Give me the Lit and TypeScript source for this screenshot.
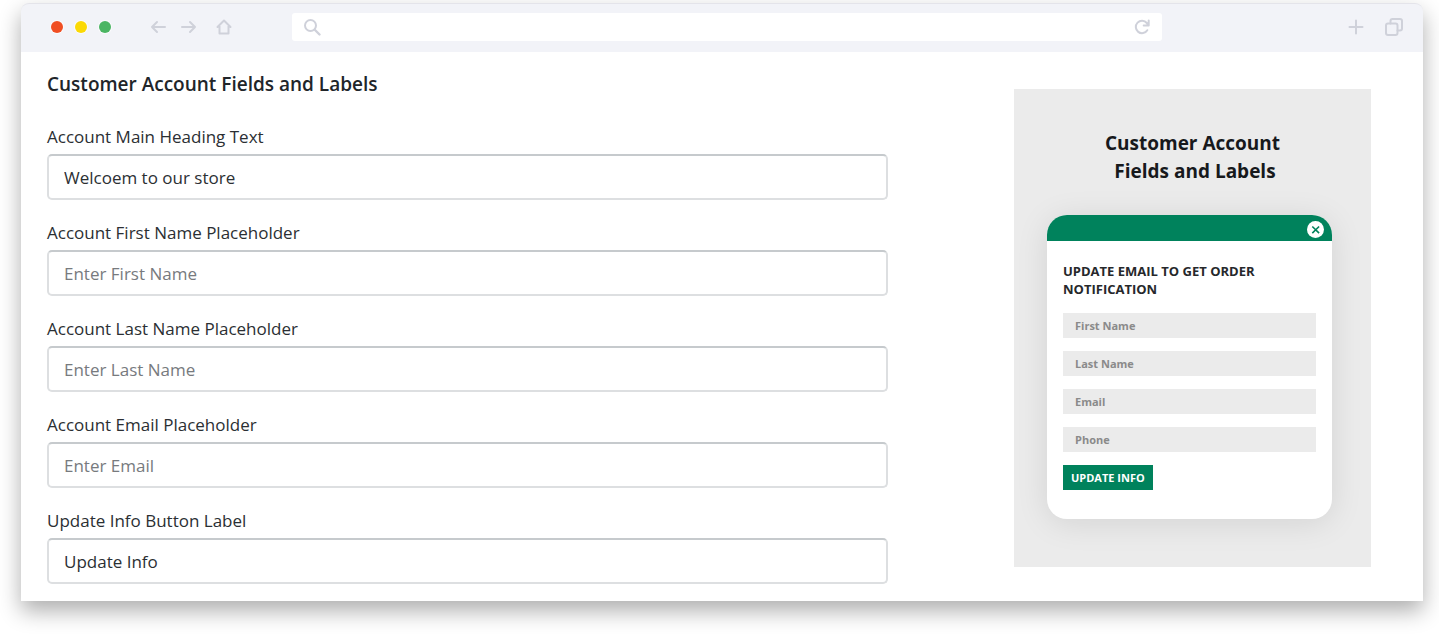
import { LitElement, html, css, svg } from "lit";
import { customElement, property } from "lit/decorators.js";

interface Field {
  id: string;
  label: string;
  value?: string;
  placeholder?: string;
}

const FIELDS: Field[] = [
  { id: "heading", label: "Account Main Heading Text", value: "Welcoem to our store" },
  { id: "first", label: "Account First Name Placeholder", placeholder: "Enter First Name" },
  { id: "last", label: "Account Last Name Placeholder", placeholder: "Enter Last Name" },
  { id: "email", label: "Account Email Placeholder", placeholder: "Enter Email" },
  { id: "button", label: "Update Info Button Label", value: "Update Info" },
];

const ICONS = {
  back: svg`<path d="M16 9H3M8 4L3 9l5 5" />`,
  forward: svg`<path d="M2 9h13M10 4l5 5-5 5" />`,
  home: svg`<path d="M2.500 9L9 2.500 15.500 9M4.500 8v7.500h9V8" />`,
  search: svg`<circle cx="7.500" cy="7.500" r="5.500" /><path d="M12 12l4.500 4.500" stroke-width="2.400" />`,
  reload: svg`<path d="M14.300 12.200A6.200 6.200 0 1 1 13.800 5l1.700 2M15.700 2.500v5h-5" />`,
  plus: svg`<path d="M9 2.500v13M2.500 9h13" />`,
  tabs: svg`<rect x="1" y="5.500" width="11.500" height="11.500" rx="2" /><path d="M5.500 5.500V3a2 2 0 0 1 2-2H15a2 2 0 0 1 2 2v7.500a2 2 0 0 1-2 2h-2.500" />`,
};

@customElement("browser-toolbar")
export class BrowserToolbar extends LitElement {
  static styles = css`
    :host {
      display: flex;
      align-items: center;
      height: 49px;
      padding: 0 20px 2px 30px;
      box-sizing: border-box;
      background: #f2f3f8;
      border-top: 1px solid #e4e4ea;
      border-radius: 8px 8px 0 0;
    }
    .dots {
      display: flex;
      gap: 12px;
    }
    .dot {
      width: 12px;
      height: 12px;
      border-radius: 50%;
      box-shadow: 0 0 0 1px #fafafc;
    }
    .red { background: #f04e23; }
    .yellow { background: #fbd905; }
    .green { background: #4bb563; }
    .nav {
      display: flex;
      gap: 13px;
      margin-left: 38px;
    }
    .nav .last {
      margin-left: 4px;
    }
    .address {
      flex: 1;
      display: flex;
      align-items: center;
      height: 28px;
      margin-left: 59px;
      padding: 0 11px;
      border-radius: 3px;
      background: #fff;
    }
    .query {
      flex: 1;
      min-width: 0;
      height: 24px;
      border: 0;
      outline: 0;
      background: transparent;
      font: 14px "Open Sans", sans-serif;
    }
    .actions {
      display: flex;
      gap: 20px;
      margin-left: 185px;
    }
    .icon {
      display: flex;
      padding: 0;
      border: 0;
      background: none;
      color: #cfd1da;
    }
    svg {
      fill: none;
      stroke: currentColor;
      stroke-width: 2;
      stroke-linecap: round;
      stroke-linejoin: round;
    }
  `;

  private icon(name: keyof typeof ICONS, label: string, size = 18, extra = "") {
    return html`<button class="icon ${extra}" type="button" aria-label=${label}>
      <svg width=${size} height=${size} viewBox="0 0 18 18">${ICONS[name]}</svg>
    </button>`;
  }

  render() {
    return html`
      <div class="dots">
        <span class="dot red"></span><span class="dot yellow"></span><span class="dot green"></span>
      </div>
      <div class="nav">
        ${this.icon("back", "Back")} ${this.icon("forward", "Forward")}
        ${this.icon("home", "Home", 18, "last")}
      </div>
      <div class="address">
        ${this.icon("search", "Search")}
        <input class="query" type="text" aria-label="Address" />
        ${this.icon("reload", "Reload")}
      </div>
      <div class="actions">
        ${this.icon("plus", "New tab")} ${this.icon("tabs", "Tabs")}
      </div>
    `;
  }
}

@customElement("settings-field")
export class SettingsField extends LitElement {
  @property({ attribute: false }) field!: Field;

  static styles = css`
    :host {
      display: flex;
      flex-direction: column;
      gap: 5px;
    }
    .label {
      font-size: 17px;
      line-height: 24px;
      color: #2b2f33;
    }
    .input {
      box-sizing: border-box;
      width: 100%;
      height: 46px;
      padding: 0 15px;
      border: 2px solid #dddfe1;
      border-top-color: #c6cacd;
      border-radius: 5px;
      outline: 0;
      background: #fff;
      color: #2b2f33;
      font: inherit;
      font-size: 17px;
    }
    .input::placeholder {
      color: #777a7e;
      opacity: 1;
    }
  `;

  render() {
    const { id, label, value = "", placeholder = "" } = this.field;
    return html`
      <label class="label" for=${id}>${label}</label>
      <input class="input" id=${id} type="text" .value=${value} placeholder=${placeholder} />
    `;
  }
}

@customElement("popup-preview")
export class PopupPreview extends LitElement {
  static styles = css`
    :host {
      display: block;
      box-sizing: border-box;
      padding: 40px 0 48px;
      background: #ebebeb;
    }
    .title {
      margin: 0 0 30px;
      font-size: 19px;
      line-height: 28px;
      font-weight: 700;
      text-align: center;
      color: #17191c;
    }
    .card {
      margin: 0 39px 0 33px;
      border-radius: 20px;
      overflow: hidden;
      background: #fff;
      box-shadow: 0 4px 32px rgba(0, 0, 0, 0.1);
    }
    .bar {
      display: flex;
      justify-content: flex-end;
      align-items: center;
      height: 26px;
      padding: 2px 8px 0;
      box-sizing: border-box;
      background: #00825c;
    }
    .close {
      display: flex;
      padding: 0;
      border: 0;
      background: none;
    }
    .body {
      padding: 21px 16px 29px;
    }
    .lead {
      margin: 0 0 15px;
      font-size: 13px;
      line-height: 18px;
      font-weight: 700;
      color: #26282b;
    }
    .form {
      display: flex;
      flex-direction: column;
      align-items: flex-start;
      gap: 13px;
    }
    .box {
      box-sizing: border-box;
      width: 100%;
      height: 25px;
      padding: 0 12px 1px;
      border: 0;
      outline: 0;
      border-radius: 0;
      background: #ebebeb;
      font: inherit;
      font-size: 11px;
      font-weight: 700;
    }
    .box::placeholder {
      color: #8a8a8a;
      opacity: 1;
    }
    .submit {
      height: 25px;
      padding: 0 8px;
      border: 0;
      background: #00825c;
      color: #fff;
      font: inherit;
      font-size: 11px;
      font-weight: 700;
      white-space: nowrap;
    }
  `;

  render() {
    return html`
      <h2 class="title">Customer Account<br />&nbsp;Fields and Labels</h2>
      <div class="card">
        <div class="bar">
          <button class="close" type="button" aria-label="Close">
            <svg width="17" height="17" viewBox="0 0 17 17">
              <circle cx="8.500" cy="8.500" r="8.500" fill="#fff" />
              <path d="M5.300 5.500l6.800 6.600M12.100 5.500l-6.800 6.600" stroke="#00825c" stroke-width="1.600" />
            </svg>
          </button>
        </div>
        <div class="body">
          <p class="lead">UPDATE EMAIL TO GET ORDER NOTIFICATION</p>
          <div class="form">
            ${["First Name", "Last Name", "Email", "Phone"].map(
              (name) => html`<input class="box" type="text" placeholder=${name} aria-label=${name} />`
            )}
            <button class="submit" type="button">UPDATE INFO</button>
          </div>
        </div>
      </div>
    `;
  }
}

@customElement("app-root")
export class AppRoot extends LitElement {
  static styles = css`
    :host {
      display: block;
      padding: 3px 16px 33px 21px;
      background: #fff;
      font-family: "Open Sans", "Noto Sans", sans-serif;
      overflow: hidden;
    }
    .window {
      border-radius: 8px 8px 0 0;
      background: #fff;
      box-shadow: 0 10px 22px rgba(0, 0, 0, 0.32);
    }
    .content {
      display: flex;
      align-items: flex-start;
      gap: 126px;
      padding: 18px 52px 17px 26px;
    }
    .settings {
      flex: 1;
      min-width: 0;
      display: flex;
      flex-direction: column;
      gap: 21px;
    }
    .heading {
      margin: 0 0 6px;
      font-size: 19px;
      line-height: 28px;
      font-weight: 600;
      color: #212529;
    }
    .preview {
      flex: 0 0 357px;
      margin-top: 19px;
    }
  `;

  render() {
    return html`
      <main class="window">
        <browser-toolbar></browser-toolbar>
        <div class="content">
          <section class="settings">
            <h1 class="heading">Customer Account Fields and Labels</h1>
            ${FIELDS.map((f) => html`<settings-field .field=${f}></settings-field>`)}
          </section>
          <popup-preview class="preview"></popup-preview>
        </div>
      </main>
    `;
  }
}
